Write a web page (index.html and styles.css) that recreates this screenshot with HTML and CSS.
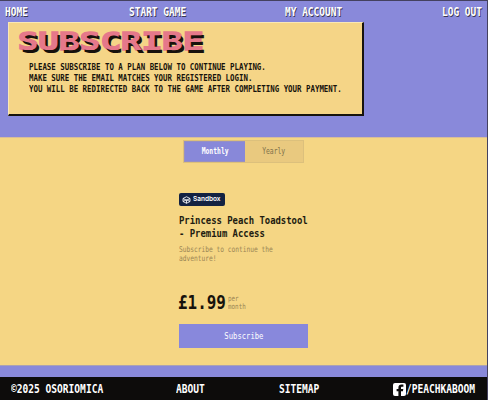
FILE: index.html
```html
<!DOCTYPE html>
<html lang="en">
<head>
<meta charset="utf-8">
<title>Subscribe</title>
<link rel="stylesheet" href="styles.css">
</head>
<body>
<div class="page">
  <header class="hero">
    <nav class="nav">
      <a class="t nav-home">HOME</a>
      <a class="t nav-start">START GAME</a>
      <a class="t nav-account">MY ACCOUNT</a>
      <a class="t nav-logout">LOG OUT</a>
    </nav>
    <section class="card">
      <h1 class="title">SUBSCRIBE</h1>
      <div class="intro">
        <p class="t">PLEASE SUBSCRIBE TO A PLAN BELOW TO CONTINUE PLAYING.</p>
        <p class="t">MAKE SURE THE EMAIL MATCHES YOUR REGISTERED LOGIN.</p>
        <p class="t">YOU WILL BE REDIRECTED BACK TO THE GAME AFTER COMPLETING YOUR PAYMENT.</p>
      </div>
    </section>
  </header>
  <main class="plans">
    <div class="toggle">
      <div class="tab active"><span class="t mid">Monthly</span></div>
      <div class="tab"><span class="t mid">Yearly</span></div>
    </div>
    <div class="plan">
      <div class="badge">
        <svg class="cube" viewBox="0 0 18 16"><path d="M9 1.5L16 5v6l-7 3.5L2 11V5zM2 5l7 3.5L16 5M9 8.5v6M2 11l7-3.5 7 3.5"/></svg>
        <span>Sandbox</span>
      </div>
      <h2 class="t name">Princess Peach Toadstool<br>- Premium Access</h2>
      <p class="t desc">Subscribe to continue the<br>adventure!</p>
      <div class="cost">
        <div class="amount"><span class="t">£1.99</span></div>
        <div class="t per">per<br>month</div>
      </div>
      <div class="buy"><span class="t mid">Subscribe</span></div>
    </div>
  </main>
  <div class="band"></div>
  <footer class="footer">
    <span class="t foot-copy">©2025 OSORIOMICA</span>
    <a class="t foot-about">ABOUT</a>
    <a class="t foot-map">SITEMAP</a>
    <a class="social">
      <svg class="fb" viewBox="0 0 13 13"><rect width="13" height="13" rx="2" fill="#fff"/><path d="M5.4 13V8.2H3.6V5.9h1.8V4.6C5.4 2.7 6.6 1.6 8.5 1.6h1.9v2.2H9.1c-.8 0-1.1.4-1.1 1v1.1h2.3l-.4 2.3H8V13z" fill="#0d0c0b"/></svg>
      <span class="t">/PEACHKABOOM</span>
    </a>
  </footer>
</div>
</body>
</html>
```

FILE: styles.css
```css
* { box-sizing: border-box; margin: 0; padding: 0; }
body { width: 488px; height: 400px; overflow: hidden; background: #3f3d59; font-family: "DejaVu Sans Mono", monospace; }
.page { width: 488px; height: 400px; border-top: 1px solid #44415f; border-right: 1px solid #44415f; background: #8989da; overflow: hidden; }

/* condensed mono lettering */
.t { display: block; white-space: nowrap; transform: scaleX(.785); transform-origin: 0 50%; font-weight: bold; }
.mid { transform-origin: 50% 50%; }

.hero { height: 136px; background: #8989da; }
.nav { display: flex; height: 21px; color: #fff; font-size: 12.1px; line-height: 22px; text-shadow: 1px 1px 0 #38364f; }
.nav-home { width: 123.5px; margin-left: 5px; }
.nav-start { width: 156.5px; }
.nav-account { width: 157px; }
.nav-logout { width: 45px; }

.card { width: 356px; height: 94px; margin-left: 8px; padding: 5px 0 0 9px; background: #f5d587; border: solid; border-width: 1px 2px 2px 1px; border-color: #fae8b5 #17130c #17130c #fae8b5; }
.title { width: 190px; height: 28px; white-space: nowrap; font: bold 25px/28px "DejaVu Sans Mono", monospace; color: #e5788a; transform: scaleX(1.37); transform-origin: 0 50%; -webkit-text-stroke: 1.6px #e5788a; paint-order: stroke fill; text-shadow: 1.8px 2.5px 0 #17110c; }
.intro { margin: 5px 0 0 11px; font-size: 9.46px; line-height: 11px; color: #17130c; }

.plans { height: 228px; padding-top: 2px; background: #f5d684; border-top: 1px solid #d8bd9a; }
.toggle { display: flex; width: 121px; height: 23px; margin-left: 183px; background: #e9c97f; border: 1px solid #dcc07c; }
.tab { display: flex; flex: 1; align-items: center; justify-content: center; padding-bottom: 2px; font-size: 8.15px; color: #80704a; }
.tab .t { font-weight: normal; }
.active { flex: 0 0 61px; background: #8888d9; color: #fff; border: 1px solid #9790c2; border-width: 1px 0 1px 1px; }
.active .t { font-weight: bold; }

.plan { width: 129px; margin: 30px 0 0 179px; }
.badge { display: flex; align-items: center; width: 46px; height: 13px; gap: 2px; padding-left: 3px; border-radius: 2px; background: #132242; color: #fff; font: 600 6.5px/13px Inter, sans-serif; }
.cube { width: 9px; height: 8px; fill: none; stroke: #fff; stroke-width: 1.7; stroke-linejoin: round; }
.name { margin-top: 8px; font-size: 11.35px; line-height: 12.5px; color: #211b10; }
.desc { margin-top: 7px; font-size: 7.95px; line-height: 8.5px; font-weight: normal; color: #9a8554; }
.cost { display: flex; height: 30px; margin-top: 25px; }
.amount { width: 49px; margin-left: -1px; font-size: 20.3px; line-height: 29px; color: #17130c; }
.per { padding-top: 7px; margin-left: 1px; font-size: 7.5px; line-height: 8px; font-weight: normal; color: #9a8554; }
.buy { display: flex; align-items: center; justify-content: center; height: 24px; margin-top: 6px; padding-bottom: 1px; background: #8888dc; color: #fff; font-size: 9.2px; }
.buy .t { font-weight: normal; }
.band { height: 12px; background: #8989da; border-top: 1px solid #aba2b4; }

.footer { display: flex; height: 24px; background: #0d0c0b; color: #fff; font-size: 12.2px; line-height: 25px; }
.foot-copy { width: 165.5px; margin-left: 10.5px; }
.foot-about { width: 102.5px; }
.foot-map { width: 114.5px; }
.social { display: flex; align-items: center; width: 90px; }
.fb { flex: 0 0 13px; width: 13px; height: 13px; }
```
